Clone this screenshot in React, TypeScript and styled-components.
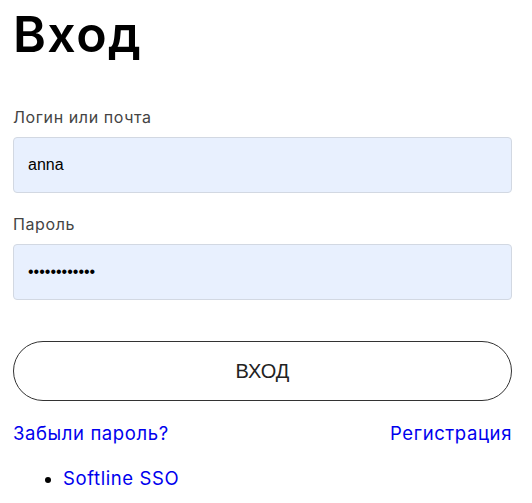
import React, { useState } from "react";
import styled, { createGlobalStyle } from "styled-components";

const GlobalStyle = createGlobalStyle`
  body {
    margin: 0;
    background: #ffffff;
    font-family: Inter, "Noto Sans", sans-serif;
  }
`;

const Page = styled.div`
  padding: 0 20px 0 13px;
`;

const Title = styled.h1`
  margin: 0;
  padding-top: 4px;
  font-size: 50px;
  line-height: 60px;
  font-weight: 600;
  letter-spacing: 1.4px;
  color: #000;
`;

const Form = styled.form`
  display: flex;
  flex-direction: column;
  margin-top: 43px;
`;

const Field = styled.div`
  display: flex;
  flex-direction: column;
  gap: 10px;
  margin-bottom: 21px;
`;

const Label = styled.label`
  font-size: 16px;
  line-height: 20px;
  letter-spacing: 0.6px;
  color: #444;
`;

const Input = styled.input`
  box-sizing: border-box;
  height: 56px;
  width: 100%;
  padding: 0 14px;
  border: 1px solid #d2d8e2;
  border-radius: 4px;
  background: #e8f0fe;
  font-family: "Liberation Sans", Arial, sans-serif;
  font-size: 16px;
  color: #000;
  outline: none;
`;

const SubmitButton = styled.button`
  box-sizing: border-box;
  margin-top: 20px;
  height: 60px;
  width: 100%;
  border: 1px solid #333;
  border-radius: 30px;
  background: #fff;
  font-family: "Liberation Sans", Arial, sans-serif;
  font-size: 20px;
  color: #222;
  cursor: pointer;
`;

const LinksRow = styled.div`
  display: flex;
  justify-content: space-between;
  margin-top: 20px;
`;

const Link = styled.a`
  font-size: 18.5px;
  line-height: 24px;
  letter-spacing: 0.6px;
  color: #0000ee;
  text-decoration: none;
`;

const ProviderList = styled.ul`
  margin: 21px 0 0;
  padding-left: 50px;
  font-size: 18px;
  line-height: 24px;
`;

const App = () => {
  const [login, setLogin] = useState("anna");
  const [password, setPassword] = useState("............");

  return (
    <Page>
      <GlobalStyle />
      <Title>Вход</Title>
      <Form onSubmit={(e) => e.preventDefault()}>
        <Field>
          <Label htmlFor="login">Логин или почта</Label>
          <Input
            id="login"
            value={login}
            onChange={(e) => setLogin(e.target.value)}
          />
        </Field>
        <Field>
          <Label htmlFor="password">Пароль</Label>
          <Input
            id="password"
            type="password"
            value={password}
            onChange={(e) => setPassword(e.target.value)}
          />
        </Field>
        <SubmitButton type="submit">ВХОД</SubmitButton>
      </Form>
      <LinksRow>
        <Link href="#">Забыли пароль?</Link>
        <Link href="#">Регистрация</Link>
      </LinksRow>
      <ProviderList>
        <li>
          <Link href="#">Softline SSO</Link>
        </li>
      </ProviderList>
    </Page>
  );
};

export default App;
